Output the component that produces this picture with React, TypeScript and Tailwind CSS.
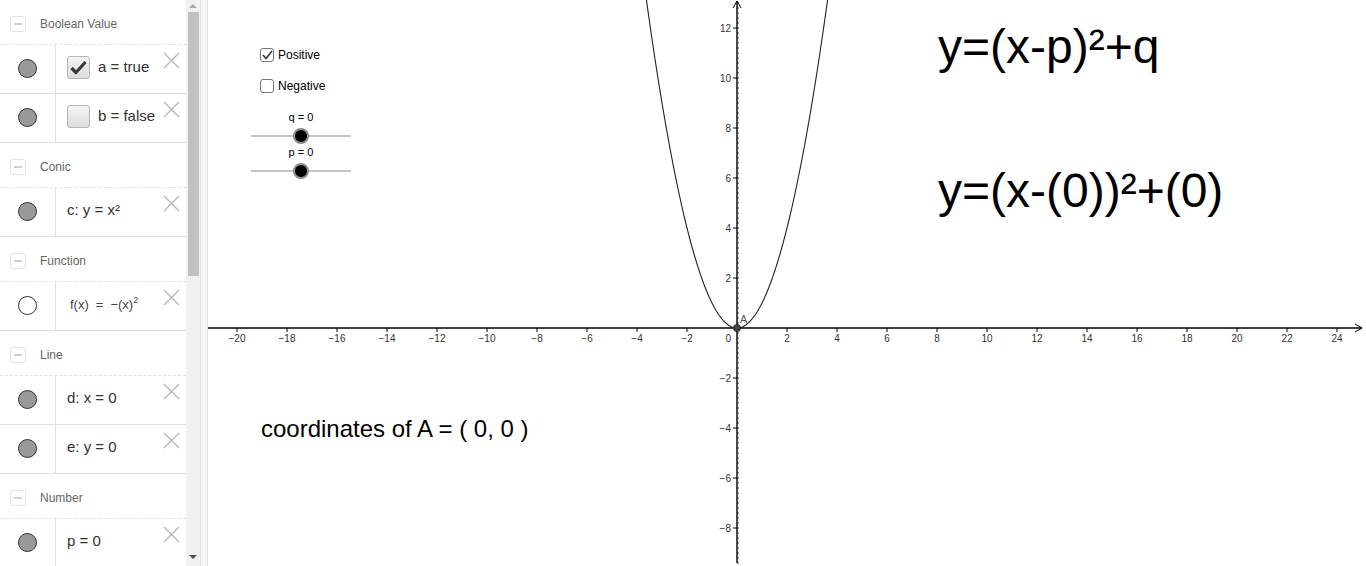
import React from "react";

const OX = 529; // origin inside graphics view
const OY = 328;
const U = 25; // px per unit

const Marble = ({ on = true }: { on?: boolean }) => (
  <span
    className={`block w-[19px] h-[19px] rounded-full border border-[#333] ${on ? "bg-[#999]" : "bg-white"}`}
  />
);

const DeleteX = () => (
  <svg className="absolute right-[6px] top-[7px]" width="17" height="17" viewBox="0 0 17 17">
    <path d="M1 1 L16 16 M16 1 L1 16" stroke="#b8b8b8" strokeWidth="1.4" fill="none" />
  </svg>
);

const Header = ({ label }: { label: string }) => (
  <div className="flex items-center h-[45px] border-b border-dashed border-[#e2e2e2] pl-[10px] pt-[4px]">
    <span className="w-[16px] h-[16px] rounded-[3px] border border-[#e4e4e4] flex items-center justify-center">
      <span className="block w-[8px] h-[2px] bg-[#d0d0d0]" />
    </span>
    <span className="ml-[14px] text-[12px] text-[#666]">{label}</span>
  </div>
);

const Row = ({ on = true, children }: { on?: boolean; children: React.ReactNode }) => (
  <div className="flex h-[49px] border-b border-[#e0e0e0]">
    <div className="w-[56px] flex items-center justify-center border-r border-[#e0e0e0] pb-[2px]">
      <Marble on={on} />
    </div>
    <div className="relative flex-1 flex items-center pl-[11px] pb-[3px] text-[15px] text-[#333]">
      {children}
      <DeleteX />
    </div>
  </div>
);

const BoolBox = ({ checked }: { checked: boolean }) => (
  <span className="w-[23px] h-[23px] rounded-[3px] border border-[#b5b5b5] bg-gradient-to-b from-[#f4f4f4] to-[#dcdcdc] flex items-center justify-center mr-[8px]">
    {checked && (
      <svg width="17" height="15" viewBox="0 0 17 15">
        <path d="M1.5 8 L6 12.5 L15.5 2" stroke="#3a3a3a" strokeWidth="3.2" fill="none" strokeLinejoin="round" />
      </svg>
    )}
  </span>
);

const AlgebraView = () => (
  <div className="w-[186px] h-full overflow-hidden bg-white">
    <Header label="Boolean Value" />
    <Row>
      <BoolBox checked />
      <span>a = true</span>
    </Row>
    <Row>
      <BoolBox checked={false} />
      <span>b = false</span>
    </Row>
    <Header label="Conic" />
    <Row>c: y = x²</Row>
    <Header label="Function" />
    <Row on={false}>
      <span className="ml-[3px] text-[13px] text-[#444]">
        f(x)<span className="mx-[7px]">=</span>−(x)<sup className="text-[9px] -top-[6px]">2</sup>
      </span>
    </Row>
    <Header label="Line" />
    <Row>d: x = 0</Row>
    <Row>e: y = 0</Row>
    <Header label="Number" />
    <Row>p = 0</Row>
  </div>
);

const Scrollbar = () => (
  <div className="w-[14px] h-full bg-[#f1f1f1] flex flex-col items-center">
    <svg className="mt-[3px]" width="8" height="6" viewBox="0 0 8 6">
      <path d="M0 5 L4 1 L8 5 Z" fill="#a8a8a8" />
    </svg>
    <div className="w-[11px] h-[264px] bg-[#c1c1c1] mt-[3px]" />
    <div className="flex-1" />
    <svg className="mb-[6px]" width="8" height="6" viewBox="0 0 8 6">
      <path d="M0 1 L4 5 L8 1 Z" fill="#505050" />
    </svg>
  </div>
);

const Check = ({ checked, label }: { checked: boolean; label: string }) => (
  <div className="flex items-center gap-[4px] h-[16px]">
    <span className="w-[14px] h-[14px] rounded-[3px] border border-[#767676] bg-white flex items-center justify-center">
      {checked && (
        <svg width="11" height="10" viewBox="0 0 11 10">
          <path d="M1 5 L4 8.5 L10 1" stroke="#333" strokeWidth="1.6" fill="none" />
        </svg>
      )}
    </span>
    <span className="text-[12px] text-black">{label}</span>
  </div>
);

const GraphicsView = () => {
  const xTicks: number[] = [];
  for (let i = -20; i <= 24; i += 2) if (i !== 0) xTicks.push(i);
  const yTicks: number[] = [];
  for (let j = -8; j <= 12; j += 2) if (j !== 0) yTicks.push(j);

  const minorY: number[] = [];
  for (let y = 0; y <= 566; y += 5) minorY.push(y + (OY % 5));

  const pts: string[] = [];
  for (let x = -3.7; x <= 3.7001; x += 0.05) {
    pts.push(`${(OX + x * U).toFixed(2)},${(OY - x * x * U).toFixed(2)}`);
  }

  const minus = (n: number) => (n < 0 ? `−${-n}` : `${n}`);

  return (
    <div className="relative flex-1 h-full bg-white overflow-hidden">
      <svg className="absolute inset-0" width="1158" height="566" style={{ fontFamily: '"Liberation Sans", Arial, sans-serif' }}>
        {/* minor ticks on y axis */}
        {minorY.map((y) => (
          <line key={`my${y}`} x1={OX} y1={y} x2={OX + 2} y2={y} stroke="#444" strokeWidth="1" />
        ))}
        {/* axes */}
        <line x1="0" y1={OY} x2="1154" y2={OY} stroke="#000" strokeWidth="1.4" />
        <path d={`M1147 ${OY - 4} L1154 ${OY} L1147 ${OY + 4}`} stroke="#000" strokeWidth="1" fill="none" />
        <line x1={OX} y1="1" x2={OX} y2="563" stroke="#000" strokeWidth="1.4" />
        <path d={`M${OX - 4} 8 L${OX} 1 L${OX + 4} 8`} stroke="#000" strokeWidth="1" fill="none" />
        {xTicks.map((i) => (
          <g key={`x${i}`}>
            <line x1={OX + i * U} y1={OY} x2={OX + i * U} y2={OY + 4} stroke="#000" strokeWidth="1" />
            <text x={OX + i * U} y={OY + 14} fontSize="10" fill="#333" textAnchor="middle">
              {minus(i)}
            </text>
          </g>
        ))}
        {yTicks.map((j) => (
          <g key={`y${j}`}>
            <line x1={OX - 4} y1={OY - j * U} x2={OX} y2={OY - j * U} stroke="#000" strokeWidth="1" />
            <text x={OX - 6} y={OY - j * U + 4} fontSize="10" fill="#333" textAnchor="end">
              {minus(j)}
            </text>
          </g>
        ))}
        <text x={OX - 6} y={OY + 14} fontSize="10" fill="#333" textAnchor="end">
          0
        </text>
        {/* parabola c */}
        <polyline points={pts.join(" ")} stroke="#222" strokeWidth="1.1" fill="none" />
        {/* point A */}
        <circle cx={OX} cy={OY} r="3.5" fill="#444" stroke="#222" strokeWidth="1" />
        <text x={OX + 3} y={OY - 5} fontSize="11" fill="#555">
          A
        </text>
        {/* sliders */}
        <text x="93" y="121" fontSize="11" fill="#000" textAnchor="middle">
          q = 0
        </text>
        <line x1="43" y1="136" x2="143" y2="136" stroke="#8a8a8a" strokeWidth="1" />
        <circle cx="93" cy="136" r="7" fill="#000" stroke="#8c8c8c" strokeWidth="2" />
        <text x="93" y="156" fontSize="11" fill="#000" textAnchor="middle">
          p = 0
        </text>
        <line x1="43" y1="171" x2="143" y2="171" stroke="#8a8a8a" strokeWidth="1" />
        <circle cx="93" cy="171" r="7" fill="#000" stroke="#8c8c8c" strokeWidth="2" />
      </svg>

      <div className="absolute left-[52px] top-[47px]">
        <Check checked label="Positive" />
      </div>
      <div className="absolute left-[52px] top-[78px]">
        <Check checked={false} label="Negative" />
      </div>

      <div className="absolute left-[730px] top-[23px] text-[48px] leading-none text-black whitespace-nowrap">
        y=(x-p)²+q
      </div>
      <div className="absolute left-[730px] top-[167px] text-[48px] leading-none text-black whitespace-nowrap">
        y=(x-(0))²+(0)
      </div>
      <div className="absolute left-[53px] top-[417px] text-[24px] leading-none text-black whitespace-nowrap">
        coordinates of A = ( 0, 0 )
      </div>
    </div>
  );
};

export default function App() {
  return (
    <div
      className="flex w-[1366px] h-[566px] overflow-hidden bg-white"
      style={{ fontFamily: '"Liberation Sans", Arial, sans-serif' }}
    >
      <AlgebraView />
      <Scrollbar />
      <div className="w-[8px] h-full bg-[#f5f5f5] border-x border-[#e3e3e3]" />
      <GraphicsView />
    </div>
  );
}
